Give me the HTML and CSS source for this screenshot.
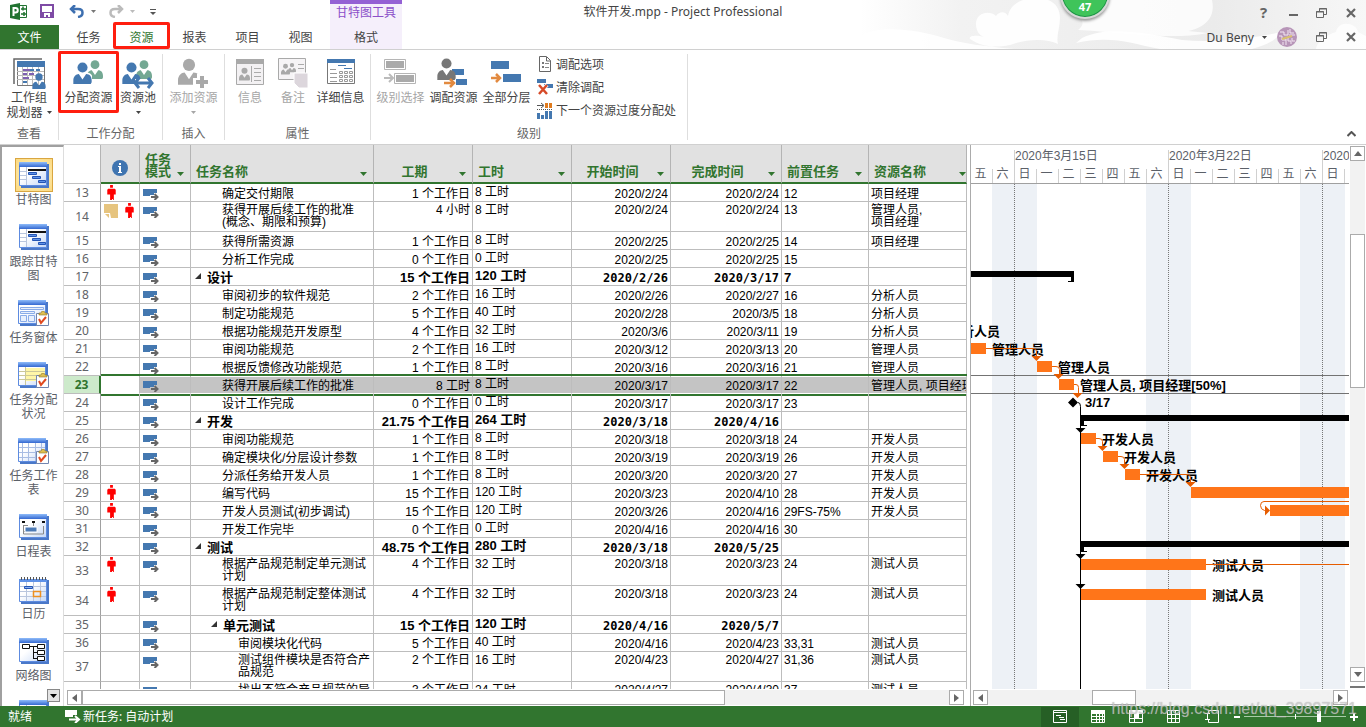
FILE: index.html
```html
<!DOCTYPE html>
<html lang="zh-CN">
<head>
<meta charset="utf-8">
<title>软件开发.mpp - Project Professional</title>
<link rel="stylesheet" href="styles.css">
</head>
<body>
<svg class="defs" aria-hidden="true">
  <defs>
    <linearGradient id="gTop" x1="0" y1="0" x2="0" y2="1"><stop offset="0" stop-color="#8fbcfa"/><stop offset="1" stop-color="#3468d0"/></linearGradient>
    <linearGradient id="gBody" x1="0" y1="0" x2="1" y2="1"><stop offset="0.4" stop-color="#fff"/><stop offset="1" stop-color="#c5d8f7"/></linearGradient>
    <symbol id="auto" viewBox="0 0 16 12"><path fill="#4478b0" d="M0 1h14v4h-3v2H7v1H0z"/><path d="M8 9h6M11.500 6l3 3-3 3" fill="none" stroke="#666" stroke-width="2"/></symbol>
    <symbol id="man" viewBox="0 0 9 16"><path fill="#f00" d="M3 0h3v3H3zM1 4h7l1 1v5H7v6H6v-1H5v1H3v-6H0V5z"/></symbol>
    <symbol id="note" viewBox="0 0 14 14"><path fill="#e6c47f" d="M0 0h14v14H7L6 9H0z"/><path fill="#e6c47f" d="M1 10h4v4z"/></symbol>
    <symbol id="open" viewBox="0 0 7 7"><path fill="#333" d="M6 0v6H0z"/></symbol>
    <symbol id="down" viewBox="0 0 7 4"><path fill="currentColor" d="M0 0h7L3.500 4z"/></symbol>
    <symbol id="person" viewBox="0 0 20 24"><circle cx="10" cy="6" r="5.500"/><path d="M0 24v-4c0-4 3-7 6-7l4 6 4-6c4 0 6 3 6 7v2l-1 2z"/></symbol>
    <symbol id="win" viewBox="0 0 30 26"><path fill="#4a78c8" d="M2 2h28v24H2z"/><path fill="url(#gBody)" stroke="#5d8be0" d="M.5.500h27v23H.5z"/><path fill="url(#gTop)" d="M0 0h28v5H0z"/></symbol>
    <symbol id="clip" viewBox="0 0 14 15"><path fill="#fff" stroke="#7286b0" d="M.5 2.500h12v12H.5z"/><path fill="#e0c050" stroke="#8a7430" stroke-width=".6" d="M3 4V2h2l1-2h2l1 2h2v2z"/><path fill="none" stroke="#e04a20" stroke-width="2" d="M3 8l2 4 5-6"/></symbol>
    <symbol id="restore" viewBox="0 0 11 10"><path fill="none" stroke="#666" stroke-width="1" d="M3.500 3V.5h7v6H8M.5 3.500h7v6h-7z"/><path stroke="#666" d="M0 4h8M3 1h8"/></symbol>
    <symbol id="close" viewBox="0 0 10 10"><path stroke="#666" stroke-width="2.200" d="M1 1l8 8M9 1L1 9"/></symbol>
  </defs>
</svg>

<header class="top">
  <svg class="clouds" viewBox="0 0 506 49" aria-hidden="true">
    <defs><linearGradient id="haze"><stop offset="0" stop-color="#fff"/><stop offset=".2" stop-color="#f2f2f2"/><stop offset=".7" stop-color="#ebebeb"/><stop offset="1" stop-color="#f7f7f7"/></linearGradient></defs>
    <path fill="url(#haze)" d="M0 0h506v49H0z"/>
    <path fill="#fff" d="M0 49V36c20-12 60-6 84 2 20 6 40 8 70 11zM116 24c0-12 14-14 20-8 4-6 10-4 12 0 2-12 14-18 28-18 16 0 24 8 24 20 0 10-4 18-2 26-12-6-32-5-48 1-16 3-28 2-40-6-2-4 8-4 14-2-6-2-8-8-8-13zM222 38c24-12 60-6 100 2 40 4 80-4 100-8-10 12-20 14-30 17H300c-30-6-50-14-84-6z" opacity=".9"/>
    <path fill="#fff" d="M202 0h150c4 18-8 28-24 31l20 2c-40 8-100-2-130-3 12-10-2-16-16-30zM476 32c2-12 20-10 22 0l8 4v13h-50c0-6 10-14 20-17z" opacity=".8"/>
  </svg>
  <div class="titlebar">
    <div class="qat">
      <svg width="17" height="17"><path fill="#217331" d="M0 2l10-2v17L0 15z"/><path fill="none" stroke="#217331" d="M10 2.500h6.500v12H10"/><path fill="none" stroke="#fff" stroke-width="2" d="M3.500 13V5h2c3 0 3 4.500 0 4.500h-2"/><path stroke="#217331" stroke-width="1.500" d="M11 6h5M13 3.500v4M11 11h5M14 9v4"/></svg>
      <button class="tb save" aria-label="保存"><svg width="14" height="14"><path fill="none" stroke="#7e4ba5" stroke-width="2" d="M1 1h12v12H1z"/><path fill="#7e4ba5" d="M1 8h12v5H1z"/><path fill="#fff" d="M4 9h6v4H8v-2H6v2H4z"/></svg></button>
      <button class="tb" aria-label="撤消"><svg width="16" height="13"><path fill="none" stroke="#3d6fb0" stroke-width="2.500" d="M6 0L2 4l4 4M2 4h7c6 0 6 7 0 8"/></svg></button>
      <svg class="caret" width="5" height="3"><use href="#down"/></svg>
      <button class="tb redo" aria-label="恢复"><svg width="16" height="13"><path fill="none" stroke="#bbb" stroke-width="2.500" d="M10 0l4 4-4 4M14 4H7C1 4 1 11 7 12"/></svg></button>
      <svg class="caret dim" width="5" height="3"><use href="#down"/></svg>
      <svg class="more" width="6" height="8"><path stroke="#555" d="M0 1.500h6"/><path fill="#555" d="M0 4h6L3 7z"/></svg>
    </div>
    <div class="ctx-title">甘特图工具</div>
    <h1>软件开发.mpp - Project Professional</h1>
    <div class="wincontrols">
      <button class="wc help" aria-label="帮助">?</button>
      <button class="wc" aria-label="最小化"><svg width="10" height="10"><path fill="#666" d="M1 6h9v2H1z"/></svg></button>
      <button class="wc" aria-label="还原"><svg width="11" height="10"><use href="#restore"/></svg></button>
      <button class="wc" aria-label="关闭"><svg width="10" height="10"><use href="#close"/></svg></button>
    </div>
  </div>
  <nav class="tabs">
    <button class="tab file">文件</button>
    <button class="tab first">任务</button>
    <button class="tab active marked">资源</button>
    <button class="tab">报表</button>
    <button class="tab">项目</button>
    <button class="tab">视图</button>
    <button class="tab ctx">格式</button>
    <div class="account">
      <button class="user">Du Beny <svg width="5" height="3"><use href="#down"/></svg></button>
      <svg class="avatar" width="20" height="20"><circle cx="10" cy="10" r="10" fill="#b795b8"/><path fill="none" stroke="#f3e6f2" d="M3 5h4v3h4V3M13 2v4h4M2 9h3v4h4M12 8h6M11 10v4h3v3M15 11v3h3M6 15v3M9 12v6"/><path stroke="#d8c070" stroke-width="2" d="M5 12l10-3"/></svg>
      <button class="wc" aria-label="还原窗口"><svg width="11" height="10"><use href="#restore"/></svg></button>
      <button class="wc" aria-label="关闭窗口"><svg width="10" height="10"><use href="#close"/></svg></button>
    </div>
  </nav>
  <div class="badge">47</div>
</header>

<section class="ribbon">
  <div class="group g1">
    <div class="tools">
      <button class="big"><svg width="34" height="32"><path fill="none" stroke="#666" stroke-width="1.500" d="M2 27V2h28"/><path fill="#fff" stroke="#777" d="M5.500 5.500h27v23h-27z"/><path fill="#4478b0" d="M5 4h28v6H5z"/><path stroke="#bbb" d="M5 14.500h27M5 18.500h27M5 22.500h27M10.500 10v18M15.500 10v18M20.500 10v18M26.500 10v18"/><path stroke="#7d5fb0" stroke-width="2" d="M11 13h7M11 17h4M17 17h5M11 21h6"/><path stroke="#4478b0" stroke-width="2" d="M18 13h4M11 25h4M24 13h4"/><svg x="20" y="16" width="14" height="16"><use href="#person" fill="#4478b0"/></svg></svg>工作组<br><span>规划器 <svg width="5" height="3"><use href="#down"/></svg></span></button>
    </div>
    <h2>查看</h2>
  </div>
  <div class="group g2">
    <div class="tools">
      <button class="big marked assign"><svg width="32" height="32"><svg x="14" y="2" width="16" height="21"><use href="#person" fill="#74a893"/></svg><svg x="0" y="5" width="19" height="22"><use href="#person" fill="#fff" stroke="#fff" stroke-width="3"/><use href="#person" fill="#4478b0"/></svg></svg>分配资源</button>
      <button class="big"><svg width="32" height="32"><svg x="14" y="2" width="16" height="21"><use href="#person" fill="#74a893"/></svg><svg x="0" y="5" width="19" height="22"><use href="#person" fill="#4478b0"/></svg><path stroke="#fff" stroke-width="8" d="M13 26h19"/><path fill="none" stroke="#4478b0" stroke-width="3" d="M14 26h15M17 21l-4 5 4 5M26 21l4 5-4 5"/></svg>资源池<svg class="drop" width="5" height="3"><use href="#down"/></svg></button>
    </div>
    <h2>工作分配</h2>
  </div>
  <div class="group g3">
    <div class="tools">
      <button class="big off" disabled><svg width="32" height="32"><svg x="1" y="1" width="22" height="27"><use href="#person" fill="#a9a9a9"/></svg><path stroke="#fff" stroke-width="8" d="M24 17v15M16 25h16"/><path stroke="#a9a9a9" stroke-width="4" d="M25 19v12M19 25h12"/></svg>添加资源<svg class="drop" width="5" height="3"><use href="#down"/></svg></button>
    </div>
    <h2>插入</h2>
  </div>
  <div class="group g4">
    <div class="tools">
      <button class="big off w42" disabled><svg width="30" height="32"><path fill="#f3f1f3" stroke="#a9a9a9" d="M1.500 3.500h27v24h-27z"/><path fill="#a9a9a9" d="M1 2h28v5H1z"/><svg x="4" y="10" width="11" height="14"><use href="#person" fill="#a9a9a9"/></svg><path stroke="#aaa" d="M16.500 9v16M19 11.500h7M19 15.500h7M19 19.500h7M19 23.500h7"/></svg>信息</button>
      <button class="big off w42" disabled><svg width="30" height="32"><path fill="#f6f4f6" stroke="#a9a9a9" d="M.5 1.500h27v21H.5z"/><svg x="3" y="6" width="9" height="12"><use href="#person" fill="#a9a9a9"/></svg><svg x="10" y="5" width="8" height="11"><use href="#person" fill="#a9a9a9"/></svg><path stroke="#aaa" d="M20 7.500h6M20 11.500h6"/><path fill="#dcd6dc" stroke="#fff" d="M16 16h14v15h-9l-5-5z"/></svg>备注</button>
      <button class="big w52"><svg width="30" height="32"><path fill="#fff" stroke="#777" d="M1.500 3.500h27v23h-27z"/><path fill="#4478b0" d="M1 2h28v4H1z"/><path stroke="#4478b0" d="M12 8.500h8M18 11.500h8"/><path stroke="#999" d="M4 12.500h6M4 16.500h7M4 20.500h7M4 24.500h7"/><path fill="none" stroke="#999" d="M13.500 14.500h3v2h-3zM18.500 14.500h3v2h-3zM23.500 14.500h3v2h-3zM13.500 18.500h3v2h-3zM18.500 18.500h3v2h-3zM23.500 18.500h3v2h-3zM13.500 22.500h3v2h-3zM18.500 22.500h3v2h-3zM23.500 22.500h3v2h-3z"/></svg>详细信息</button>
    </div>
    <h2>属性</h2>
  </div>
  <div class="group g5">
    <div class="tools">
      <button class="big off w53" disabled><svg width="32" height="32"><path fill="none" stroke="#b5b5b5" d="M.5 2.500h21v10H.5zM10.500 16.500h21v10h-21z"/><path fill="#aaa" d="M2 4h18v7H2zM12 18h18v7H12z"/><path fill="none" stroke="#bbb" stroke-width="2" d="M0 21h9M5 17l4 4-4 4"/></svg>级别选择</button>
      <button class="big w53"><svg width="32" height="32"><path fill="#4478b0" d="M15 12h12v6H15zM19 22h11v6H19z"/><svg x="0" y="1" width="19" height="22"><use href="#person" fill="#777"/></svg><path stroke="#fff" stroke-width="5" d="M6 26h11"/><path fill="none" stroke="#e28a40" stroke-width="2.500" d="M7 26h10M13 22l4 4-4 4"/></svg>调配资源</button>
      <button class="big w53"><svg width="32" height="32"><path fill="#4478b0" d="M1 4h18v8H1zM13 17h18v8H13z"/><path fill="none" stroke="#e28a40" stroke-width="2.500" d="M1 21h9M6 17l4 4-4 4"/></svg>全部分层</button>
      <div class="list">
        <button><svg width="17" height="17"><path fill="#fff" stroke="#666" d="M2.500.500h7l4 4v11h-11zM9.500 1v4h4"/><path stroke="#777" stroke-width="2" d="M5 7h2M5 11h2"/><path stroke="#888" d="M8 7.500h4M8 11.500h4"/></svg>调配选项</button>
        <button><svg width="17" height="17"><path fill="#4478b0" d="M0 0h9v4H0zM7 5h9v4H7z"/><path stroke="#fff" stroke-width="4" d="M2 6l8 9M10 6l-8 9"/><path stroke="#d64a28" stroke-width="2.500" d="M2 6l8 9M10 6l-8 9"/></svg>清除调配</button>
        <button><svg width="17" height="17"><path fill="#e07b1e" d="M8 1h3v5H8zM12 1h3v5h-3z"/><path fill="none" stroke="#555" d="M0 3.500h6M4 1l3 2.500L4 6"/><path stroke="#555" stroke-dasharray="1 1" d="M0 7.500h16"/><path fill="#4478b0" d="M0 11h3v6H0zM4 13h3v4H4zM8 9h3v8H8zM12 9h3v8h-3z"/></svg>下一个资源过度分配处</button>
      </div>
    </div>
    <h2>级别</h2>
  </div>
  <button class="collapse" aria-label="折叠功能区"><svg width="9" height="6"><path fill="none" stroke="#555" stroke-width="2" d="M.5 5l4-4 4 4"/></svg></button>
</section>

<main class="work">
  <nav class="views">
    <button class="view on"><span class="ic"><svg width="30" height="26"><use href="#win"/><path stroke="#b9c6de" d="M1 9.500h6M1 13.500h6M1 17.500h6M7.500 5v18"/><path stroke="#111" stroke-width="2" d="M9 8h18"/><path fill="#5f92e8" stroke="#2455b5" d="M9.500 10.500h8v2h-8zM13.500 14.500h8v2h-8zM19.500 18.500h7v2h-7z"/></svg></span>甘特图</button>
    <button class="view"><span class="ic"><svg width="30" height="26"><use href="#win"/><path stroke="#b9c6de" d="M1 9.500h6M1 13.500h6M1 17.500h6M7.500 5v18"/><path stroke="#111" stroke-width="2" d="M9 8h18"/><path fill="#5f92e8" stroke="#2455b5" d="M9.500 10.500h8v2h-8zM13.500 14.500h8v2h-8zM19.500 18.500h7v2h-7z"/></svg></span>跟踪甘特图</button>
    <button class="view"><span class="ic"><svg width="32" height="26"><use href="#win" width="30"/><path fill="#e8f0fd" stroke="#8aace8" d="M2.500 7.500h23v2h-23zM2.500 11.500h14v2h-14zM2.500 15.500h6v6h-6zM10.500 15.500h6v6h-6z"/><use href="#clip" x="18" y="11" width="14" height="15"/></svg></span>任务窗体</button>
    <button class="view"><span class="ic"><svg width="32" height="26"><use href="#win" width="30"/><path fill="#fff7a8" d="M7 6h20v13H7z"/><path stroke="#ccc89a" d="M1 9.500h26M1 13.500h26M1 17.500h26M7.500 5v18"/><use href="#clip" x="18" y="11" width="14" height="15"/></svg></span>任务分配状况</button>
    <button class="view"><span class="ic"><svg width="32" height="26"><use href="#win" width="30"/><path stroke="#a9bde3" d="M1 9.500h26M1 14.500h26M1 19.500h26M4.500 5v18M10.500 5v18M17.500 5v18M23.500 5v18"/><use href="#clip" x="18" y="11" width="14" height="15"/></svg></span>任务工作表</button>
    <button class="view"><span class="ic"><svg width="30" height="26"><use href="#win"/><path fill="none" stroke="#888" d="M4.500 12v8h20v-8M4 11.500h5M14.500 8v4M4 17.500h5"/><path stroke="#111" stroke-width="2" d="M3 8h3M13 8h3M23 8h3"/><path fill="#4b79b5" stroke="#fff" d="M6 13h12v5H6z"/></svg></span>日程表</button>
    <button class="view"><span class="ic"><svg width="30" height="28"><path fill="#4a78c8" d="M2 4h28v24H2z"/><path fill="url(#gBody)" stroke="#5d8be0" d="M.5 3.500h27v22H.5z"/><path fill="#5f92e8" d="M0 3h28v3H0z"/><path stroke="#555" stroke-width="3" stroke-dasharray="1 2" d="M2 2.500h25"/><path stroke="#b9c6de" d="M1 10.500h26M1 15.500h26M1 20.500h26M7.500 6v19M14.500 6v19M21.500 6v19"/><path fill="#8ab0f0" stroke="#2455b5" d="M5.500 10.500h8v2h-8z"/><path fill="none" stroke="#ee9020" stroke-width="1.500" d="M14.500 15.500h7v5h-7z"/></svg></span>日历</button>
    <button class="view"><span class="ic"><svg width="30" height="26"><use href="#win"/><path fill="none" stroke="#111" d="M10 8.500h8M14.500 8v12M14 14.500h4M14 20.500h4"/><path fill="#fff" stroke="#111" d="M3.500 6.500h7v4h-7zM18.500 6.500h7v4h-7zM18.500 12.500h7v4h-7zM18.500 18.500h7v4h-7z"/></svg></span>网络图</button>
    <button class="view"><span class="ic"><svg width="30" height="26"><use href="#win"/><path stroke="#a9bde3" d="M1 9.500h26M7.500 5v18"/></svg></span>资源工作表</button>
    <button class="scrolldown" aria-label="更多视图"><svg width="7" height="4"><use href="#down"/></svg></button>
  </nav>

  <section class="sheet">
    <div class="clip">
    <table>
      <colgroup><col class="c-id"><col class="c-info"><col class="c-mode"><col class="c-name"><col class="c-99"><col class="c-99"><col class="c-99"><col class="c-fin"><col class="c-pred"><col class="c-res"></colgroup>
      <thead><tr>
        <th class="corner"></th>
        <th><svg class="info" width="16" height="16"><circle cx="8" cy="8" r="8" fill="#3f74b0"/><path fill="#fff" d="M7 3h2v2H7zM6 6h3v6h1v1H6v-1h1V7H6z"/></svg></th>
        <th><div class="h"><span>任务<br>模式</span><svg width="7" height="4"><use href="#down"/></svg></div></th>
        <th><div class="h"><span>任务名称</span><svg width="7" height="4"><use href="#down"/></svg></div></th>
        <th><div class="h mid"><span>工期</span><svg width="7" height="4"><use href="#down"/></svg></div></th>
        <th><div class="h"><span>工时</span><svg width="7" height="4"><use href="#down"/></svg></div></th>
        <th><div class="h mid"><span>开始时间</span><svg width="7" height="4"><use href="#down"/></svg></div></th>
        <th><div class="h mid"><span>完成时间</span><svg width="7" height="4"><use href="#down"/></svg></div></th>
        <th><div class="h"><span>前置任务</span><svg width="7" height="4"><use href="#down"/></svg></div></th>
        <th><div class="h last"><span>资源名称</span><svg width="7" height="4"><use href="#down"/></svg></div></th>
      </tr></thead>
      <tbody>
        <tr><td>13<td><svg class="man"><use href="#man"/></svg><td><svg class="auto"><use href="#auto"/></svg><td class="l2">确定交付期限<td>1 个工作日<td>8 工时<td>2020/2/24<td>2020/2/24<td>12<td>项目经理
        <tr class="tall"><td>14<td><svg class="note"><use href="#note"/></svg><svg class="man"><use href="#man"/></svg><td><svg class="auto"><use href="#auto"/></svg><td class="l2">获得开展后续工作的批准<br>(概念、期限和预算)<td>4 小时<td>8 工时<td>2020/2/24<td>2020/2/24<td>13<td>管理人员,<br>项目经理
        <tr><td>15<td><td><svg class="auto"><use href="#auto"/></svg><td class="l2">获得所需资源<td>1 个工作日<td>8 工时<td>2020/2/25<td>2020/2/25<td>14<td>项目经理
        <tr><td>16<td><td><svg class="auto"><use href="#auto"/></svg><td class="l2">分析工作完成<td>0 个工作日<td>0 工时<td>2020/2/25<td>2020/2/25<td>15<td>
        <tr class="sum"><td>17<td><td><svg class="auto"><use href="#auto"/></svg><td class="l1"><svg class="open"><use href="#open"/></svg>设计<td>15 个工作日<td>120 工时<td>2020/2/26<td>2020/3/17<td>7<td>
        <tr><td>18<td><td><svg class="auto"><use href="#auto"/></svg><td class="l2">审阅初步的软件规范<td>2 个工作日<td>16 工时<td>2020/2/26<td>2020/2/27<td>16<td>分析人员
        <tr><td>19<td><td><svg class="auto"><use href="#auto"/></svg><td class="l2">制定功能规范<td>5 个工作日<td>40 工时<td>2020/2/28<td>2020/3/5<td>18<td>分析人员
        <tr><td>20<td><td><svg class="auto"><use href="#auto"/></svg><td class="l2">根据功能规范开发原型<td>4 个工作日<td>32 工时<td>2020/3/6<td>2020/3/11<td>19<td>分析人员
        <tr><td>21<td><td><svg class="auto"><use href="#auto"/></svg><td class="l2">审阅功能规范<td>2 个工作日<td>16 工时<td>2020/3/12<td>2020/3/13<td>20<td>管理人员
        <tr><td>22<td><td><svg class="auto"><use href="#auto"/></svg><td class="l2">根据反馈修改功能规范<td>1 个工作日<td>8 工时<td>2020/3/16<td>2020/3/16<td>21<td>管理人员
        <tr class="sel"><td>23<td><td><svg class="auto"><use href="#auto"/></svg><td class="l2">获得开展后续工作的批准<td>8 工时<td>8 工时<td>2020/3/17<td>2020/3/17<td>22<td>管理人员, 项目经理[50%]
        <tr><td>24<td><td><svg class="auto"><use href="#auto"/></svg><td class="l2">设计工作完成<td>0 个工作日<td>0 工时<td>2020/3/17<td>2020/3/17<td>23<td>
        <tr class="sum"><td>25<td><td><svg class="auto"><use href="#auto"/></svg><td class="l1"><svg class="open"><use href="#open"/></svg>开发<td>21.75 个工作日<td>264 工时<td>2020/3/18<td>2020/4/16<td><td>
        <tr><td>26<td><td><svg class="auto"><use href="#auto"/></svg><td class="l2">审阅功能规范<td>1 个工作日<td>8 工时<td>2020/3/18<td>2020/3/18<td>24<td>开发人员
        <tr><td>27<td><td><svg class="auto"><use href="#auto"/></svg><td class="l2">确定模块化/分层设计参数<td>1 个工作日<td>8 工时<td>2020/3/19<td>2020/3/19<td>26<td>开发人员
        <tr><td>28<td><td><svg class="auto"><use href="#auto"/></svg><td class="l2">分派任务给开发人员<td>1 个工作日<td>8 工时<td>2020/3/20<td>2020/3/20<td>27<td>开发人员
        <tr><td>29<td><svg class="man"><use href="#man"/></svg><td><svg class="auto"><use href="#auto"/></svg><td class="l2">编写代码<td>15 个工作日<td>120 工时<td>2020/3/23<td>2020/4/10<td>28<td>开发人员
        <tr><td>30<td><svg class="man"><use href="#man"/></svg><td><svg class="auto"><use href="#auto"/></svg><td class="l2">开发人员测试(初步调试)<td>15 个工作日<td>120 工时<td>2020/3/26<td>2020/4/16<td>29FS-75%<td>开发人员
        <tr><td>31<td><td><svg class="auto"><use href="#auto"/></svg><td class="l2">开发工作完毕<td>0 个工作日<td>0 工时<td>2020/4/16<td>2020/4/16<td>30<td>
        <tr class="sum"><td>32<td><td><svg class="auto"><use href="#auto"/></svg><td class="l1"><svg class="open"><use href="#open"/></svg>测试<td>48.75 个工作日<td>280 工时<td>2020/3/18<td>2020/5/25<td><td>
        <tr class="tall"><td>33<td><svg class="man"><use href="#man"/></svg><td><svg class="auto"><use href="#auto"/></svg><td class="l2">根据产品规范制定单元测试<br>计划<td>4 个工作日<td>32 工时<td>2020/3/18<td>2020/3/23<td>24<td>测试人员
        <tr class="tall"><td>34<td><svg class="man"><use href="#man"/></svg><td><svg class="auto"><use href="#auto"/></svg><td class="l2">根据产品规范制定整体测试<br>计划<td>4 个工作日<td>32 工时<td>2020/3/18<td>2020/3/23<td>24<td>测试人员
        <tr class="sum"><td>35<td><td><svg class="auto"><use href="#auto"/></svg><td class="l2s"><svg class="open"><use href="#open"/></svg>单元测试<td>15 个工作日<td>120 工时<td>2020/4/16<td>2020/5/7<td><td>
        <tr><td>36<td><td><svg class="auto"><use href="#auto"/></svg><td class="l3">审阅模块化代码<td>5 个工作日<td>40 工时<td>2020/4/16<td>2020/4/23<td>33,31<td>测试人员
        <tr class="tall"><td>37<td><td><svg class="auto"><use href="#auto"/></svg><td class="l3">测试组件模块是否符合产<br>品规范<td>2 个工作日<td>16 工时<td>2020/4/23<td>2020/4/27<td>31,36<td>测试人员
        <tr class="tall"><td><td><td><svg class="auto"><use href="#auto"/></svg><td class="l3">找出不符合产品规范的异<br>常情况<td>3 个工作日<td>24 工时<td>2020/4/27<td>2020/4/30<td>37<td>测试人员
      </tbody>
    </table>
    </div>
    <div class="hbar sheetbar">
      <button aria-label="向左"><svg width="5" height="8"><path d="M5 0v8L0 4z"/></svg></button>
      <div class="thumb"></div><div class="rest"></div>
      <button aria-label="向右"><svg width="5" height="8"><path d="M0 0v8l5-4z"/></svg></button>
    </div>
  </section>

  <section class="gantt">
    <div class="chart">
      <div class="scale">
        <div class="weeks"><span>2020年3月15日</span><span>2020年3月22日</span><span>2020年3月29日</span></div>
        <div class="days"><span>五</span><span>六</span><span>日</span><span>一</span><span>二</span><span>三</span><span>四</span><span>五</span><span>六</span><span>日</span><span>一</span><span>二</span><span>三</span><span>四</span><span>五</span><span>六</span><span>日</span><span></span></div>
      </div>
      <svg class="plot">
        <defs>
          <path id="ah" d="M-5 0H5L0 5z"/>
        </defs>
        <g fill="#edf1f6"><rect x="21" width="45" height="100%"/><rect x="175" width="45" height="100%"/><rect x="329" width="45" height="100%"/></g>
        <g stroke="#777" stroke-dasharray="1 1"><line x1="43.500" x2="43.500" y2="100%"/><line x1="197.500" x2="197.500" y2="100%"/><line x1="351.500" x2="351.500" y2="100%"/></g>
        <path stroke="#737373" d="M0 191.500h2000M0 209.500h2000"/>
        <path d="M0 87h103v11h-6v-1h3v-4H0zM110 231h2000v6H113v4h3v1h-6zM110 357h2000v6H113v4h3v1h-6zM97 218.500l5-5 5 5-5 5z"/>
        <path fill="none" stroke="#000" d="M107 218.500q2.500 0 2.500 4V505"/>
        <use href="#ah" x="109.500" y="244"/><use href="#ah" x="109.500" y="370"/><use href="#ah" x="109.500" y="400"/>
        <g fill="#ff7519"><path d="M0 159h15v11H0zM66 177h15v11H66zM88 195h15v11H88zM110 249h15v11h-15zM132 267h15v11h-15zM154 285h15v11h-15zM220 303h2000v11H220zM299 321h2000v11H299zM110 375h125v11H110zM110 405h125v11H110z"/></g>
        <g class="lbl">
          <text x="-23" y="152">分析人员</text><text x="21" y="170">管理人员</text><text x="87" y="188">管理人员</text>
          <text x="109" y="206">管理人员, 项目经理[50%]</text><text x="114" y="223">3/17</text>
          <text x="131" y="260">开发人员</text><text x="153" y="278">开发人员</text><text x="175" y="296">开发人员</text>
          <text x="241" y="386">测试人员</text><text x="241" y="416">测试人员</text>
        </g>
        <path fill="none" stroke="#e65c00" d="M15 164.500h47q3.500 0 3.500 3V173M81 182.500h4q3.500 0 3.500 3V191M103 200.500h2q2.500 0 2.500 3V210M125 254.500h3q3.500 0 3.500 3V263M147 272.500h3q3.500 0 3.500 3V281M169 290.500h47q3.500 0 3.500 3V299M2000 317.500H293q-3.500 0-3.500 4t4 5h2M235 380.500h2000"/>
        <g fill="#e65c00"><use href="#ah" x="65.500" y="172"/><use href="#ah" x="87.500" y="190"/><use href="#ah" x="106.500" y="209"/><use href="#ah" x="131.500" y="262"/><use href="#ah" x="153.500" y="280"/><use href="#ah" x="219.500" y="298"/><path d="M294 321.500v10l5-5z"/></g>
      </svg>
      <div class="hbar chartbar">
        <button aria-label="向左"><svg width="5" height="8"><path d="M5 0v8L0 4z"/></svg></button>
        <div class="before"></div><div class="thumb"></div><div class="rest"></div>
        <button aria-label="向右"><svg width="5" height="8"><path d="M0 0v8l5-4z"/></svg></button>
      </div>
    </div>
    <div class="vbar">
      <button aria-label="向上"><svg width="8" height="5"><path d="M0 5h8L4 0z"/></svg></button>
      <div class="before"></div><div class="thumb"></div><div class="rest"></div>
      <button aria-label="向下"><svg width="8" height="5"><path d="M0 0h8L4 5z"/></svg></button>
      <div class="split"></div>
    </div>
  </section>
</main>

<footer class="status">
  <span class="ready">就绪</span>
  <button class="newtask"><svg width="16" height="13"><path fill="#fff" d="M0 0h12v5H8v2H0z"/><path fill="none" stroke="#fff" stroke-width="2" d="M4 9.500h9M10 6l4 3.500-4 3.500"/></svg>新任务: 自动计划</button>
  <div class="modes">
    <button class="on" aria-label="甘特图"><svg width="14" height="13"><path fill="none" stroke="#fff" d="M.5.500h13v12H.5zM1 2.500h12M3 5.500h5M6 7.500h5M7 9.500h5"/></svg></button>
    <button aria-label="任务分配状况"><svg width="14" height="13"><path fill="none" stroke="#fff" d="M.5.500h13v12H.5zM5.500 4v9M8.500 4v9M11.500 4v9M1 6.500h12M1 9.500h12"/><path fill="#fff" d="M0 0h14v4H0z"/></svg></button>
    <button aria-label="工作组规划器"><svg width="14" height="13"><path fill="none" stroke="#fff" d="M.5.500h13v12H.5zM1 8.500h13M5.500 0v13"/><path fill="#fff" d="M0 0h14v4H0zM5 4h5v4H5z"/></svg></button>
    <button aria-label="资源工作表"><svg width="14" height="13"><path fill="none" stroke="#fff" d="M.5.500h12v12H.5zM4.500 0v13M8.500 0v13M0 4.500h13M0 8.500h13"/></svg></button>
    <button aria-label="报表"><svg width="14" height="13"><path fill="none" stroke="#fff" d="M3.500 3V.5h10v12h-10V10M0 3.500h5M0 9.500h5M2.500 3v7"/></svg></button>
  </div>
  <div class="zoom"><button aria-label="缩小"><svg width="6" height="2"><path fill="#fff" d="M0 0h6v2H0z"/></svg></button><input type="range" min="0" max="100" value="74" aria-label="缩放"><button aria-label="放大"><svg width="8" height="8"><path fill="#fff" d="M3 0h2v3h3v2H5v3H3V5H0V3h3z"/></svg></button></div>
  <div class="watermark">https://blog.csdn.net/qq_39897571</div>
</footer>
</body>
</html>
```
FILE: styles.css
```css
* { box-sizing: border-box; }
body {
  margin: 0;
  height: 100vh;
  display: flex;
  flex-direction: column;
  overflow: hidden;
  background: #fff;
  color: #444;
  font: 12px/15px "Noto Sans", "Noto Sans CJK SC", sans-serif;
}
button {
  margin: 0;
  padding: 0;
  border: 0;
  background: none;
  font: inherit;
  color: inherit;
}
h1, h2 { margin: 0; font-size: 12px; font-weight: 400; }
svg { flex: none; }
.defs { position: absolute; width: 0; height: 0; }

/* title bar and tabs */
.top { position: relative; overflow: hidden; z-index: 1; border-bottom: 1px solid #d0d0d0; }
.clouds { position: absolute; right: 0; top: 0; width: 506px; height: 49px; }
.titlebar, .tabs { position: relative; display: flex; height: 25px; }
.tabs { height: 24px; z-index: 1; }
.qat { flex: 0 0 330px; display: flex; align-items: center; padding: 0 0 3px 10px; }
.tb { display: flex; margin-left: 15px; }
.tb.save { margin-left: 13px; }
.tb.redo { margin-left: 12px; }
.caret { margin-left: 6px; color: #777; }
.caret.dim { color: #bbb; }
.more { margin: 2px 0 0 15px; }
.ctx-title {
  flex: 0 0 72px;
  border-top: 4px solid #9461d4;
  background: #f5effb;
  color: #8b4fc9;
  text-align: center;
  line-height: 17px;
}
.titlebar h1 { flex: 1; text-align: center; line-height: 24px; }
.wincontrols { flex: 0 0 402px; display: flex; justify-content: flex-end; align-items: center; padding-right: 1px; }
.wc { width: 29px; height: 20px; display: flex; align-items: center; justify-content: center; }
.wc.help { font-size: 15px; font-weight: 700; color: #666; }
.tab { width: 53px; line-height: 23px; }
.tab.file { width: 59px; background: #31752f; color: #fff; }
.tab.first { margin-left: 3px; }
.tab.active { color: #31752f; }
.tab.ctx { width: 72px; margin-left: 3px; background: #f5effb; }
.marked { position: relative; }
.marked::after {
  content: "";
  position: absolute;
  inset: -3px -2px 0 -2px;
  border: 3px solid #ff1e0f;
  border-radius: 2px;
}
.account { flex: 1; display: flex; justify-content: flex-end; align-items: center; padding-right: 1px; }
.user { display: flex; align-items: center; gap: 8px; margin-right: 10px; }
.avatar { margin-right: 10px; }
.badge {
  position: absolute;
  right: 256px;
  top: -31px;
  width: 50px;
  height: 50px;
  border: 2px solid #d8d8d8;
  border-radius: 50%;
  background: #3fc45a;
  box-shadow: inset 0 0 0 1px #1d8f46, 0 2px 3px #999;
  color: #fff;
  font-size: 11px;
  font-weight: 700;
  line-height: 72px;
  text-align: center;
}

/* ribbon */
.ribbon { display: flex; position: relative; z-index: 1; height: 95px; padding: 4px 0; border-bottom: 1px solid #d0d0d0; }
.group { display: flex; flex-direction: column; justify-content: space-between; border-right: 1px solid #dedede; }
.g1 { width: 59px; }
.g2 { width: 104px; }
.g3 { width: 62px; }
.g4 { width: 146px; }
.g5 { width: 317px; }
.group h2 { text-align: center; color: #666; line-height: 13px; }
.tools { display: flex; justify-content: center; white-space: nowrap; }
.g2 .tools { justify-content: flex-start; padding-left: 1px; }
.big { display: flex; flex-direction: column; align-items: center; height: 68px; padding-top: 3px; line-height: 15px; }
.big > svg:first-child { margin-bottom: 1px; }
.big span { display: flex; align-items: center; gap: 4px; }
.big br { display: none; }
.assign { width: 57px; height: 59px; }
.assign + .big { width: 42px; }
.drop { margin-top: 6px; }
.off { color: #a6a6a6; }
.w42 { width: 43px; }
.w52 { width: 52px; }
.w53 { width: 53px; }
.list { display: flex; flex-direction: column; gap: 6px; padding: 2px 8px 0 4px; }
.list button { display: flex; align-items: center; gap: 2px; height: 17px; }
.collapse { position: absolute; right: 10px; bottom: 4px; }

/* view bar */
.work { flex: 1; min-height: 0; display: flex; }
.views {
  position: relative;
  flex: 0 0 64px;
  overflow: hidden;
  display: flex;
  flex-direction: column;
  align-items: center;
  gap: 13px;
  padding: 11px 0 0 2px;
  border: 2px solid #a0a0a0;
  border-width: 2px 1px 0 2px;
  border-right-color: #ddd;
}
.view { flex: none; width: 50px; padding: 0 1px; color: #5b6068; line-height: 14px; word-break: break-all; display: flex; flex-direction: column; align-items: center; gap: 1px; }
.ic { height: 34px; padding: 4px; }
.ic svg { display: block; }
.view.on .ic { background: radial-gradient(#fff6c8, #fbd77c); box-shadow: inset 0 0 0 1px #d9a640; }
.scrolldown {
  position: absolute;
  right: 3px;
  bottom: 4px;
  width: 13px;
  height: 13px;
  display: flex;
  align-items: center;
  justify-content: center;
  border: 1px solid #888;
  background: #e4e4e4;
  color: #000;
}

/* task sheet */
.sheet { flex: none; width: 903px; display: flex; flex-direction: column; }
.clip { flex: 1; min-height: 0; overflow: hidden; }
table {
  width: 100%;
  table-layout: fixed;
  border-collapse: separate;
  border-spacing: 0;
  color: #000;
  font-family: "Liberation Sans", "Noto Sans CJK SC", sans-serif;
  line-height: 12px;
}
.c-id { width: 37px; }
.c-info { width: 39px; }
.c-mode { width: 51px; }
.c-name { width: 183px; }
.c-99 { width: 99px; }
.c-fin { width: 111px; }
.c-pred { width: 87px; }
.c-res { width: 98px; }
th {
  height: 39px;
  padding: 0;
  background: #e1e1e1;
  border-right: 1px solid #b4b4b4;
  border-bottom: 2px solid #31752f;
  color: #31752f;
  font-size: 13px;
  line-height: 12px;
  text-align: left;
}
th.corner { background: #fff; border-bottom: 1px solid #c0c0c0; }
.info { display: block; margin: 8px auto 0; }
.h { height: 37px; display: flex; align-items: flex-end; padding: 0 6px 4px 5px; }
.h span { flex: 1; }
.h svg { margin-bottom: 2px; }
.h.mid { text-align: center; padding-left: 0; }
.h.mid span { padding-right: 4px; }
.h.last { padding-right: 0; }
td {
  height: 18px;
  padding: 4px 2px 0;
  border: solid #bdbdbd;
  border-width: 0 1px 1px 0;
  vertical-align: top;
  white-space: nowrap;
  overflow: hidden;
}
.tall td { height: 30px; padding-top: 2px; }
td:nth-child(1) { padding: 0; vertical-align: middle; text-align: center; color: #5f6368; font-family: "Noto Sans", sans-serif; border-right-color: #a0a0a0; }
td:nth-child(2) { padding: 1px 0 0 6px; }
td:nth-child(3) { padding: 4px 0 0 3px; }
td:nth-child(5), td:nth-child(7), td:nth-child(8) { text-align: right; }
td:nth-child(6) { padding-top: 2px; }
.man { display: inline-block; width: 9px; height: 15px; vertical-align: top; }
.note { width: 14px; height: 14px; margin: 1px 7px 0 -3px; vertical-align: top; }
.auto { display: block; width: 16px; height: 12px; }
td.l1 { padding-left: 4px; }
td.l2 { padding-left: 31px; }
td.l2s { padding-left: 20px; }
td.l3 { padding-left: 47px; }
.open { width: 7px; height: 7px; margin: 1px 5px 0 0; vertical-align: top; }
.sum td:nth-child(n+4) { font-size: 13px; font-weight: 700; }
.sum td:nth-child(7), .sum td:nth-child(8) { font-family: "DejaVu Sans Mono", monospace; font-size: 12px; }
.sel td:nth-child(n+2) { box-shadow: 0 -2px 0 #31752f, 0 2px 0 #31752f, inset 0 1px 0 #fff; border-bottom-color: #fff; }
.sel td:nth-child(n+3) { background: #c4c4c4; background-clip: padding-box; }
.sel td:nth-child(1) { background: #cdeacb; color: #31752f; font-weight: 700; border-right: 2px solid #31752f; }

/* scroll bars */
.hbar, .vbar { display: flex; background: #f2f2f2; }
.hbar { flex: none; height: 15px; margin: 1px 3px 1px; }
.hbar button, .vbar button, .thumb { border: 1px solid #ababab; background: #fff; }
.hbar button, .vbar button { flex: none; width: 15px; height: 15px; display: flex; align-items: center; justify-content: center; fill: #666; }
.sheetbar .thumb { flex: 642; }
.sheetbar .rest { flex: 225; }
.chartbar { margin: 1px 1px 1px 2px; }
.chartbar .before { flex: 105; }
.chartbar .thumb { flex: 42; }
.chartbar .rest { flex: 198; }
.vbar { flex: none; width: 15px; margin: 1px 1px 0; flex-direction: column; }
.vbar .before { flex: 73; }
.vbar .thumb { flex: 152; }
.vbar .rest { flex: 280; }
.split { height: 24px; background: linear-gradient(#fff 4px, #777 4px, #777 6px, #fff 6px); }

/* gantt chart */
.gantt { flex: 1; min-width: 0; display: flex; margin-left: 3px; border-left: 1px solid #ababab; }
.chart { flex: 1; min-width: 0; display: flex; flex-direction: column; overflow: hidden; }
.scale { flex: none; height: 39px; border-bottom: 1px solid #a0a0a0; color: #5b6068; font-family: "Liberation Sans", "Noto Sans CJK SC", sans-serif; overflow: hidden; }
.weeks { display: flex; height: 24px; padding: 5px 0 0 43px; }
.weeks span { flex: none; width: 154px; height: 19px; border-left: 1px solid #d0d0d0; line-height: 12px; white-space: nowrap; }
.days { display: flex; }
.days span { flex: none; width: 22px; height: 14px; padding-right: 2px; border-right: 1px solid #d0d0d0; line-height: 10px; text-align: center; }
.plot { flex: 1; min-height: 0; width: 100%; overflow: hidden; }
.lbl { font: 700 13px "Liberation Sans", "Noto Sans CJK SC", sans-serif; fill: #000; }

/* status bar */
.status { flex: none; position: relative; height: 21px; display: flex; align-items: center; padding-left: 8px; background: #31752f; color: #fff; }
.newtask { display: flex; align-items: center; gap: 2px; margin-left: 33px; }
.modes { display: flex; margin-left: auto; height: 20px; }
.modes button { width: 38px; display: flex; align-items: center; justify-content: center; }
.modes .on { background: #265f25; }
.zoom { display: flex; align-items: center; gap: 4px; margin: 0 8px 0 3px; }
.zoom button { display: flex; }
.zoom input {
  width: 102px;
  height: 13px;
  margin: 0;
  appearance: none;
  background:
    linear-gradient(#fff, #fff) center / 1px 5px no-repeat,
    linear-gradient(#a9cba8, #a9cba8) center / 100% 1px no-repeat;
}
.zoom input::-webkit-slider-thumb { appearance: none; width: 4px; height: 11px; background: #fff; }
.watermark {
  position: absolute;
  right: 9px;
  bottom: 9px;
  color: rgba(220, 220, 220, 0.65);
  font: 16px/18px "Liberation Sans", sans-serif;
  text-shadow: 0 0 1px rgba(120, 120, 120, 0.6);
  pointer-events: none;
}
```
